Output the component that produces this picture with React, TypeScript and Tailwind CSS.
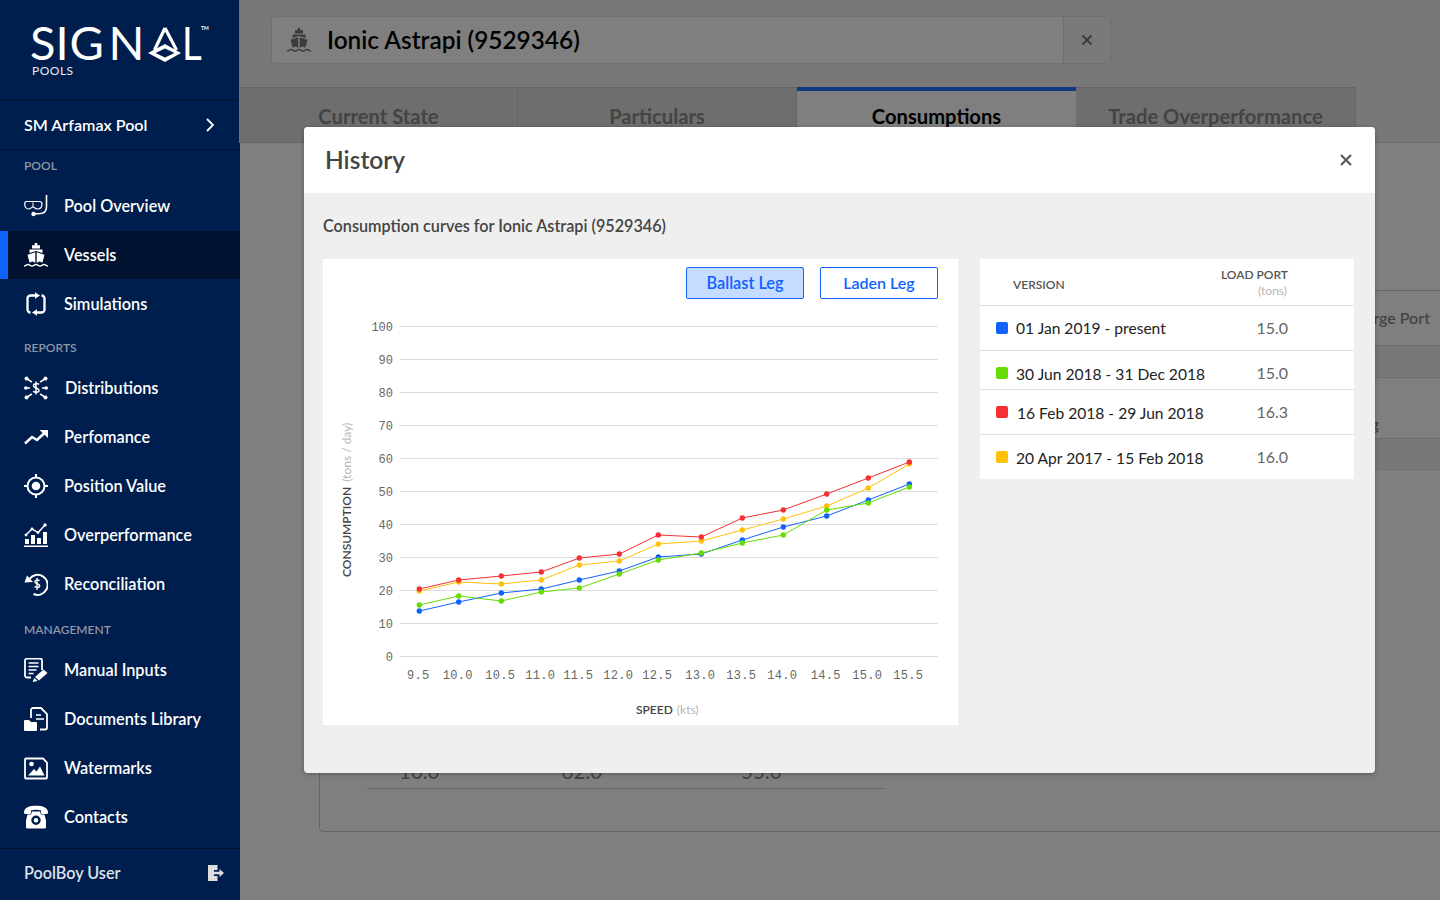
import React from "react";

type IconProps = { className?: string };

const Snorkel = () => (
  <svg width="24" height="24" viewBox="0 0 24 24" fill="none" stroke="white" className="text-white">
    <path d="M2.5 7.5h13c1.6 0 2.5 1 2.5 2.5 0 3-1.8 5-4.5 5-2 0-3-2-4.5-2s-2.3 2-4.5 2C2 15 .7 12.6.7 10c0-1.5.6-2.5 1.8-2.5z" strokeWidth="1.2" />
    <path d="M9 13V8.5" strokeWidth="1" />
    <path d="M22.5 1v12c0 4.2-3 6.8-8 6.8H10" strokeWidth="1.6" />
    <circle cx="9.5" cy="20" r="2.2" fill="white" stroke="none" />
  </svg>
);

const Ship = ({ className = "text-white" }: IconProps) => (
  <svg width="24" height="24" viewBox="0 0 24 24" fill="currentColor" className={className}>
    <path d="M10.700 0h2.600v2.300h2.700v3.200H8V2.300h2.700z" />
    <path d="M5.500 6.500h13V10L12 8 5.500 10z" />
    <path d="M3.500 11.800 11.300 9.300v10.500c-1.200-.2-1.700-1.300-3-1.300-1 0-1.500 1-2.800 1.100zM20.500 11.800 12.700 9.300v10.500c1.200-.2 1.700-1.300 3-1.300 1 0 1.500 1 2.800 1.100z" />
    <path d="M0 23c2 0 2-1.500 4-1.500s2 1.500 4 1.500 2-1.500 4-1.500 2 1.500 4 1.500 2-1.500 4-1.500 2 1.500 4 1.500" fill="none" stroke="currentColor" strokeWidth="1.500" />
  </svg>
);

const Simulations = () => (
  <svg width="24" height="24" viewBox="0 0 24 24" fill="white" stroke="none">
    <path d="M6.500 20.500a3 3 0 0 1-3-3v-11a3 3 0 0 1 3-3H12" fill="none" stroke="white" strokeWidth="2.300" />
    <path d="M11 .3l5 3.200-5 3.200z" />
    <path d="M17.500 3.500a3 3 0 0 1 3 3v11a3 3 0 0 1-3 3H12" fill="none" stroke="white" strokeWidth="2.300" />
    <path d="M13 17.300l-5 3.200 5 3.200z" />
  </svg>
);

const Distributions = () => (
  <svg width="24" height="24" viewBox="0 0 24 24" fill="white">
    <circle cx="2.500" cy="2.500" r="2" /><circle cx="21.500" cy="2.500" r="2" />
    <circle cx="1.800" cy="12" r="1.800" /><circle cx="22.200" cy="12" r="1.800" />
    <circle cx="2.500" cy="21.500" r="2" /><circle cx="21.500" cy="21.500" r="2" />
    <path d="M3 3l5 3M21 3l-5 3M2 12h4M22 12h-4M3 21l5-3M21 21l-5-3" stroke="white" strokeWidth="1.500" />
    <path d="M15 8.500c-1-1.200-5.500-1.500-5.500 1.200 0 2.800 5.500 1.800 5.500 4.600 0 2.700-4.500 2.400-5.800 1M12 5.500v13" fill="none" stroke="white" strokeWidth="1.500" />
  </svg>
);

const Trend = () => (
  <svg width="24" height="24" viewBox="0 0 24 24" fill="white">
    <path d="M1 18.500 8 12l5 3 7.500-7" fill="none" stroke="white" strokeWidth="2.600" />
    <path d="M15.500 5H24v8z" />
  </svg>
);

const Target = () => (
  <svg width="24" height="24" viewBox="0 0 24 24" fill="white">
    <circle cx="12" cy="12" r="8.500" fill="none" stroke="white" strokeWidth="2" />
    <circle cx="12" cy="12" r="4.300" />
    <path d="M12 0v4M12 20v4M0 12h4M20 12h4" stroke="white" strokeWidth="2" />
  </svg>
);

const Overperf = () => (
  <svg width="24" height="24" viewBox="0 0 24 24" fill="white">
    <rect x="1" y="16" width="4" height="5" /><rect x="7" y="12" width="4" height="9" />
    <rect x="13" y="15" width="4" height="6" /><rect x="19" y="9" width="4" height="12" />
    <rect x="0" y="22.500" width="24" height="1.500" />
    <path d="M2 12 8 6l6 3.500L21 2" fill="none" stroke="white" strokeWidth="1.400" />
    <circle cx="2" cy="12" r="1.400" /><circle cx="8" cy="6" r="1.400" /><circle cx="14" cy="9.500" r="1.400" /><circle cx="21" cy="2" r="1.700" />
  </svg>
);

const Recon = () => (
  <svg width="24" height="24" viewBox="0 0 24 24" fill="white">
    <path d="M5.500 7A10 10 0 1 1 9.500 22" fill="none" stroke="white" strokeWidth="2" />
    <path d="M.5 10.500 3 3.500l6 6.500z" />
    <path d="M15.500 8.800c-1-1-4.700-1.200-4.700 1 0 2.400 4.900 1.500 4.900 4 0 2.300-4 2-5.200.8M13 6v12" fill="none" stroke="white" strokeWidth="1.400" />
  </svg>
);

const Manual = () => (
  <svg width="24" height="24" viewBox="0 0 24 24" fill="white">
    <path d="M7 19.500H3a2 2 0 0 1-2-2V2.500a2 2 0 0 1 2-2h13a2 2 0 0 1 2 2V12" fill="none" stroke="white" strokeWidth="1.800" />
    <path d="M4.500 5h10M4.500 8.500h10M4.500 12h8M4.500 15.500h5" stroke="white" strokeWidth="1.500" />
    <path d="M19.500 11.500l4 3.500-8.500 7.500-4-3.500z" />
    <path d="M10.300 20l3.300 3-5 1z" />
  </svg>
);

const Docs = () => (
  <svg width="24" height="24" viewBox="0 0 24 24" fill="white">
    <path d="M7 11V3a2 2 0 0 1 2-2h8l6 6v13.500a2 2 0 0 1-2 2h-5" fill="none" stroke="white" strokeWidth="1.800" />
    <path d="M12 8h5M12 12h8" stroke="white" strokeWidth="1.700" />
    <path d="M0 14a1 1 0 0 1 1-1h4l2 2h5a1 1 0 0 1 1 1v7a1 1 0 0 1-1 1H1a1 1 0 0 1-1-1z" />
  </svg>
);

const Water = () => (
  <svg width="24" height="24" viewBox="0 0 24 24" fill="white">
    <path d="M1 3.500a1 1 0 0 1 1-1h17l4 4V21.500a1 1 0 0 1-1 1H2a1 1 0 0 1-1-1z" fill="none" stroke="white" strokeWidth="1.800" />
    <circle cx="7.500" cy="8" r="2.300" />
    <path d="M4 19.500 10 13l2.500 2.500 3.500-5 4.500 9z" />
  </svg>
);

const Phone = () => (
  <svg width="24" height="24" viewBox="0 0 24 24" fill="white">
    <path d="M0 6.500C1 2 6 .8 12 .8S23 2 24 6.500c0 1.500-.3 2.500-1 2.500h-5c-.8 0-1-1-1-2.500V5.500c-3-1-7-1-10 0v1C7 8 6.800 9 6 9H1C.3 9 0 8 0 6.500z" />
    <path fillRule="evenodd" d="M8 6.500h8l1 3h3.500l1.500 6v6.500a1.500 1.500 0 0 1-1.500 1.500H3.500A1.500 1.500 0 0 1 2 22v-6.500l1.500-6H7zM12 10.500a4.700 4.700 0 1 0 0 9.400 4.700 4.700 0 0 0 0-9.400zm0 2.400a2.300 2.300 0 1 1 0 4.600 2.300 2.300 0 0 1 0-4.600z" />
  </svg>
);

const Logout = () => (
  <svg width="16" height="16" viewBox="0 0 16 16">
    <path d="M0 0h9.500v5H6v6h3.500v5H0z" fill="#dddddd" />
    <path d="M6 6.700h5.500V4L16 8l-4.500 4V9.300H6z" fill="#dddddd" />
  </svg>
);

const Logo = () => (
  <svg width="240" height="100" viewBox="0 0 240 100" className="block">
    <g fill="white" fontFamily="Lato, sans-serif" fontSize="47" fontWeight="400">
      <text x="30" y="60">S</text>
      <text x="55.500" y="60">I</text>
      <text x="69.500" y="60">G</text>
      <text x="108.500" y="60">N</text>
      <text transform="translate(182 60) scale(0.82 1)">L</text>
    </g>
    <path d="M165 28 154.500 50M165 28 176.500 50" fill="none" stroke="white" strokeWidth="3.200" />
    <path fillRule="evenodd" d="M165 44 181 53 165 62 148 53zM165 48.500 155.500 53 165 57.500 174.500 53z" fill="white" />
    <text x="201" y="30" fill="white" fontFamily="Lato, sans-serif" fontSize="5" fontWeight="700">TM</text>
    <text x="32" y="75" fill="#e6e9ee" fontFamily="Lato, sans-serif" fontSize="12" letterSpacing="0.5">POOLS</text>
  </svg>
);

const NavRow = ({ icon, label, active, gap }: { icon: React.ReactNode; label: string; active?: boolean; gap?: boolean }) => (
  <div className="h-[49px] shrink-0">
    <div className={`h-12 flex items-center ${active ? "bg-[#00122f] border-l-8 border-[#0f62fe] pl-4" : "pl-6"}`}>
      <span className="w-6 h-6 shrink-0 flex items-center justify-center">{icon}</span>
      <span className={`text-[16.300px] font-semibold text-white ${gap ? "ml-[17px]" : "ml-4"}`}>{label}</span>
    </div>
  </div>
);

const SectionLabel = ({ label, className }: { label: string; className: string }) => (
  <div className={`pl-6 flex items-center text-[12px] font-semibold text-[#8e97a8] shrink-0 ${className}`}>{label}</div>
);

const Sidebar = () => (
  <aside className="w-[240px] h-[900px] bg-[#001e4d] flex flex-col shrink-0 relative z-20">
    <div className="h-[100px] shrink-0">
      <Logo />
    </div>
    <div className="h-[50px] shrink-0 border-y border-[#00122f] flex items-center justify-between pl-6 pr-[26px]">
      <span className="text-[16.100px] font-semibold text-white">SM Arfamax Pool</span>
      <svg width="8" height="14" viewBox="0 0 8 14" fill="none" stroke="white" strokeWidth="1.800"><path d="M1 1l6 6-6 6" /></svg>
    </div>
    <SectionLabel label="POOL" className="h-8" />
    <NavRow icon={<Snorkel />} label="Pool Overview" />
    <NavRow icon={<Ship />} label="Vessels" active />
    <NavRow icon={<Simulations />} label="Simulations" />
    <SectionLabel label="REPORTS" className="h-[35px] pt-[3px]" />
    <NavRow icon={<Distributions />} label="Distributions" gap />
    <NavRow icon={<Trend />} label="Perfomance" />
    <NavRow icon={<Target />} label="Position Value" />
    <NavRow icon={<Overperf />} label="Overperformance" />
    <NavRow icon={<Recon />} label="Reconciliation" />
    <SectionLabel label="MANAGEMENT" className="h-[37px] pt-[4px]" />
    <NavRow icon={<Manual />} label="Manual Inputs" />
    <NavRow icon={<Docs />} label="Documents Library" />
    <NavRow icon={<Water />} label="Watermarks" />
    <NavRow icon={<Phone />} label="Contacts" />
    <div className="mt-auto h-[52px] border-t border-[#00122f] flex items-center justify-between pl-6 pr-4 pb-[3px]">
      <span className="text-[16.200px] font-semibold text-[#dfe2e8]">PoolBoy User</span>
      <Logout />
    </div>
    <div className="absolute right-0 top-0 w-px h-[143px] bg-[#667289]" />
  </aside>
);

const Background = () => (
  <main className="flex-1 h-[900px] overflow-hidden bg-white">
    <div className="h-[143px] bg-[#f0f0f0] border-b border-[#dddddd] pt-4">
      <div className="ml-[31px] w-[840px] h-12 flex border border-[#e0e0e0] rounded bg-white">
        <div className="flex-1 flex items-center pl-[15px]">
          <Ship className="text-[#777777]" />
          <span className="ml-4 text-[24.400px] font-semibold text-black">Ionic Astrapi (9529346)</span>
        </div>
        <div className="w-[47px] flex items-center justify-center bg-[#f4f4f4] border-l border-[#e0e0e0] text-[#777777]">
          <svg width="12" height="12" viewBox="0 0 12 12" stroke="currentColor" strokeWidth="2"><path d="M1.500 1.500l9 9M10.500 1.500l-9 9" /></svg>
        </div>
      </div>
      <div className="mt-[23px] flex h-14 text-[20.200px] font-bold text-[#888888]">
        <div className="w-[278px] bg-[#dcdcdc] border-y border-r border-[#cccccc] flex justify-center pt-[13px]">Current State</div>
        <div className="w-[279px] bg-[#dcdcdc] border-y border-r border-[#cccccc] flex justify-center pt-[13px]">Particulars</div>
        <div className="w-[279px] bg-white border-t-4 border-[#1b74ff] flex justify-center pt-[10px] text-black">Consumptions</div>
        <div className="w-[280px] bg-[#dcdcdc] border-y border-r border-[#cccccc] flex justify-center pt-[13px]">Trade Overperformance</div>
      </div>
    </div>
    <div className="mt-[147px] ml-[79px] w-[1130px] h-[542px] border border-[#cccccc] rounded-bl text-[16px] font-semibold text-[#888888]">
      <div className="h-[55px] border-b border-[#dddddd] flex items-center justify-end pr-[18px]">Discharge Port</div>
      <div className="h-[32px] bg-[#f0f0f0] border-b border-[#dddddd]" />
      <div className="h-[61px] border-b border-[#dddddd] flex items-end justify-end pr-[69px] pb-[2px]">Loading</div>
      <div className="h-[31px] bg-[#f0f0f0] border-b border-[#dddddd]" />
      <div className="mt-[287px] ml-[47px] w-[517px] h-8 border-b border-[#cccccc] flex text-[20.500px] font-normal text-[#888888] leading-[28px]">
        <span className="ml-[32px]">10.0</span>
        <span className="ml-[122px]">62.0</span>
        <span className="ml-[139px]">55.0</span>
      </div>
    </div>
  </main>
);

const xs = [419.3, 458.7, 501.3, 541.3, 579.3, 619.3, 658.3, 701.3, 742.3, 783.3, 826.7, 868.3, 909.3];
const xLabels = ["9.5", "10.0", "10.5", "11.0", "11.5", "12.0", "12.5", "13.0", "13.5", "14.0", "14.5", "15.0", "15.5"];
const series = [
  { color: "#0f62fe", ys: [611, 602, 593, 589, 580, 571, 557, 554, 540, 527, 516, 500, 484] },
  { color: "#ffc107", ys: [591, 582, 584, 580, 565, 561, 544, 541, 530, 519, 506, 488, 464] },
  { color: "#66dd00", ys: [605, 596, 601, 592, 588, 574, 560, 553, 543, 535, 510, 503, 487] },
  { color: "#f43033", ys: [589, 580, 576, 572, 558, 554, 535, 537, 518, 510, 494, 478, 462] },
];
const ticks = [0, 10, 20, 30, 40, 50, 60, 70, 80, 90, 100];

const Chart = () => (
  <svg width="635" height="426" viewBox="323 299 635 426" className="block">
    {ticks.map((t) => {
      const y = 656.5 - t * 3.3;
      return (
        <g key={t}>
          <line x1="400" x2="938" y1={y} y2={y} stroke="#dddddd" strokeWidth="1" />
          <text x="393" y={y + 4.500} textAnchor="end" fontFamily="'Liberation Mono', monospace" fontSize="12" fill="#666666">{t}</text>
        </g>
      );
    })}
    {xs.map((x, i) => (
      <text key={x} x={x - 1} y="679" textAnchor="middle" fontFamily="'Liberation Mono', monospace" fontSize="12" letterSpacing="0.3" fill="#666666">{xLabels[i]}</text>
    ))}
    {series.map((s) => (
      <g key={s.color}>
        <polyline points={s.ys.map((y, i) => `${xs[i]},${y}`).join(" ")} fill="none" stroke={s.color} strokeWidth="1" />
        {s.ys.map((y, i) => (
          <circle key={i} cx={xs[i]} cy={y} r="2.700" fill={s.color} />
        ))}
      </g>
    ))}
    <text transform="translate(350.500 577) rotate(-90)" fontFamily="Lato, sans-serif" fontSize="12">
      <tspan fontWeight="600" fill="#444444">CONSUMPTION</tspan>
      <tspan dx="5" fill="#b5b5b5">(tons / day)</tspan>
    </text>
    <text x="636" y="713.500" fontFamily="Lato, sans-serif" fontSize="12">
      <tspan fontWeight="600" fill="#444444">SPEED</tspan>
      <tspan dx="4" fill="#b5b5b5">(kts)</tspan>
    </text>
  </svg>
);

const rows = [
  { color: "bg-[#0f62fe]", label: "01 Jan 2019 - present", value: "15.0", h: "h-[45px]", text: "ml-2 mt-0.5" },
  { color: "bg-[#66dd00]", label: "30 Jun 2018 - 31 Dec 2018", value: "15.0", h: "h-[39px]", text: "ml-2 mt-1" },
  { color: "bg-[#f43033]", label: "16 Feb 2018 - 29 Jun 2018", value: "16.3", h: "h-[45px]", text: "ml-[9px] mt-1" },
  { color: "bg-[#ffc107]", label: "20 Apr 2017 - 15 Feb 2018", value: "16.0", h: "h-[44px]", text: "ml-2 mt-1" },
];

const VersionTable = () => (
  <div className="w-[374px] h-[220px] bg-white overflow-hidden">
    <div className="h-[47px] border-b border-[#dddddd] pl-[33px] pr-[66px] flex items-center justify-between">
      <span className="text-[12px] font-semibold text-[#555555] mt-[5px]">VERSION</span>
      <span className="flex flex-col items-end mt-[1px]">
        <span className="text-[12px] font-semibold text-[#555555] leading-4">LOAD PORT</span>
        <span className="text-[12px] text-[#b5b5b5] leading-4 pr-px">(tons)</span>
      </span>
    </div>
    {rows.map((r, i) => (
      <div key={r.label} className={`${r.h} ${i < 3 ? "border-b border-[#dddddd]" : ""} pl-4 pr-[66px]`}>
        <div className="h-11 flex items-center">
          <span className={`w-3 h-3 rounded-[2px] shrink-0 ${r.color}`} />
          <span className={`text-[15.600px] text-[#222222] ${r.text}`}>{r.label}</span>
          <span className="ml-auto text-[16px] text-[#666666]">{r.value}</span>
        </div>
      </div>
    ))}
  </div>
);

const Modal = () => (
  <div className="absolute left-[304px] top-[127px] w-[1071px] h-[646px] rounded bg-[#efefef] overflow-hidden z-30 shadow-[0_1px_4px_rgba(0,0,0,0.3)]">
    <div className="h-[66px] bg-white flex items-center justify-between pl-[21px] pr-[23px]">
      <h2 className="text-[24.500px] font-semibold text-[#444444] mt-px">History</h2>
      <svg width="12" height="12" viewBox="0 0 12 12" stroke="#555555" strokeWidth="2" className="mb-[1px]"><path d="M1 1l10 10M11 1 1 11" /></svg>
    </div>
    <div className="pt-[22px] pl-[19px]">
      <p className="text-[16.200px] leading-[22px] font-semibold text-[#444444]">Consumption curves for Ionic Astrapi (9529346)</p>
      <div className="mt-[22px] flex gap-[22px] items-start">
        <div className="w-[635px] h-[466px] bg-white">
          <div className="h-10 pt-2 pr-5 flex justify-end gap-4">
            <button className="w-[118px] h-8 rounded-[2px] border border-[#0f62fe] bg-[#c5dbff] text-[16.300px] font-semibold text-[#0f62fe]">Ballast Leg</button>
            <button className="w-[118px] h-8 rounded-[2px] border border-[#0f62fe] bg-white text-[16px] font-semibold text-[#0f62fe]">Laden Leg</button>
          </div>
          <Chart />
        </div>
        <VersionTable />
      </div>
    </div>
  </div>
);

export default function App() {
  return (
    <div className="relative w-[1440px] h-[900px] overflow-hidden flex font-[Lato,sans-serif]">
      <Sidebar />
      <Background />
      <div className="absolute inset-0 bg-black/50 z-10" />
      <Modal />
    </div>
  );
}
